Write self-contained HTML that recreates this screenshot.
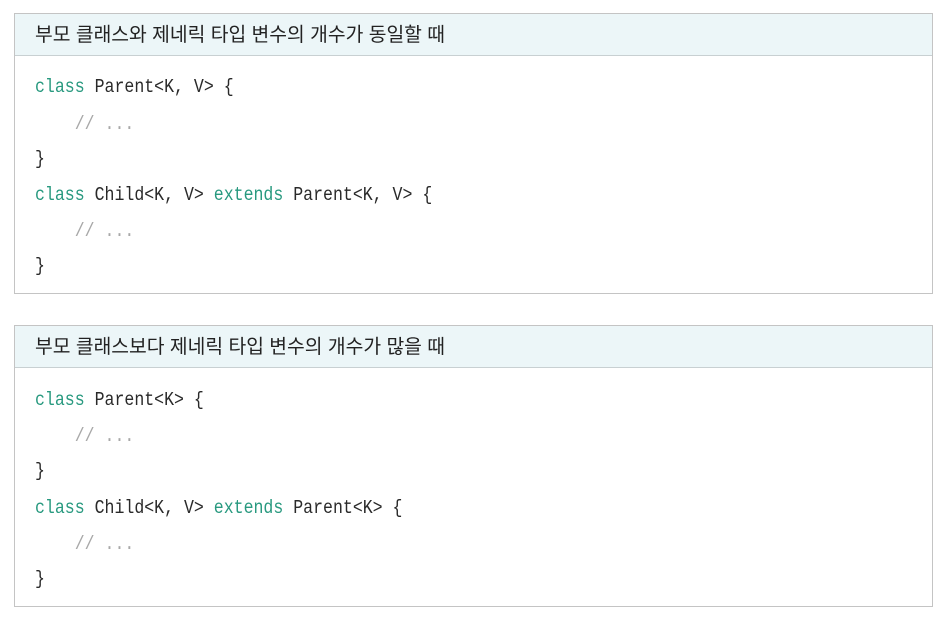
<!DOCTYPE html>
<html><head><meta charset="utf-8"><style>
body{margin:0;background:#fff;width:951px;height:621px;position:relative;overflow:hidden}
.box{position:absolute;left:14px;width:917px;border:1px solid #c4c4c4;background:#fff}
.hd{height:41px;background:#ecf6f8;border-bottom:1px solid #c8d0d2;font-family:"Liberation Sans","Noto Sans CJK KR",sans-serif;font-size:19.3px;color:#222;line-height:43px;padding-left:20px}
.code{font-family:"Liberation Mono","DejaVu Sans Mono",monospace;font-size:19px;color:#2a2a2a}
.l{position:absolute;left:20px;white-space:pre;transform:scaleX(0.871);transform-origin:0 0}
.k{color:#28997f}
.c{color:#a8a8a8}
</style></head><body>
<div class="box" style="top:13px;height:279px">
<div class="hd">부모 클래스와 제네릭 타입 변수의 개수가 동일할 때</div>
<div class="code">
<div class="l" style="top:62px"><span class="k">class</span> Parent&lt;K, V&gt; {</div>
<div class="l" style="top:99px"><span class="c">    // ...</span></div>
<div class="l" style="top:134px">}</div>
<div class="l" style="top:170px"><span class="k">class</span> Child&lt;K, V&gt; <span class="k">extends</span> Parent&lt;K, V&gt; {</div>
<div class="l" style="top:206px"><span class="c">    // ...</span></div>
<div class="l" style="top:241px">}</div>
</div></div>
<div class="box" style="top:325px;height:280px">
<div class="hd">부모 클래스보다 제네릭 타입 변수의 개수가 많을 때</div>
<div class="code">
<div class="l" style="top:63px"><span class="k">class</span> Parent&lt;K&gt; {</div>
<div class="l" style="top:99px"><span class="c">    // ...</span></div>
<div class="l" style="top:134px">}</div>
<div class="l" style="top:171px"><span class="k">class</span> Child&lt;K, V&gt; <span class="k">extends</span> Parent&lt;K&gt; {</div>
<div class="l" style="top:207px"><span class="c">    // ...</span></div>
<div class="l" style="top:242px">}</div>
</div></div>
</body></html>
